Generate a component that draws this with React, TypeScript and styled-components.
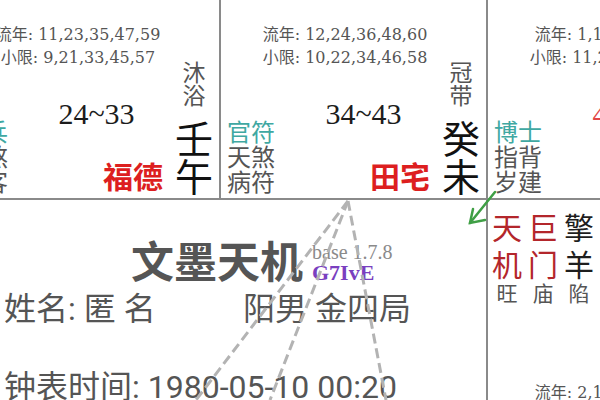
import React from "react";
import styled, { createGlobalStyle } from "styled-components";

const GlobalStyle = createGlobalStyle`
  html, body { margin: 0; padding: 0; background: #fff; }
  body {
    width: 600px;
    height: 400px;
    overflow: hidden;
    font-family: "Noto Sans CJK SC", "Noto Sans", sans-serif;
  }
`;

const CJK = `"Noto Sans CJK SC", "Noto Sans", sans-serif`;

const Viewport = styled.div`
  position: relative;
  width: 600px;
  height: 400px;
  overflow: hidden;
  background: #fff;
`;

const Chart = styled.div`
  display: grid;
  grid-template-columns: 267px 267px 267px;
  grid-template-rows: 358px 358px;
  width: max-content;
  margin: -158px 0 0 -46px;
`;

const Cell = styled.div<{ $col: number; $row: number; $span?: number }>`
  grid-column: ${(p) => p.$col} / span ${(p) => p.$span ?? 1};
  grid-row: ${(p) => p.$row};
  border-right: 2px solid #8a8a8a;
  border-bottom: 2px solid #8a8a8a;
  display: flex;
  flex-direction: column;
  min-width: 0;
  overflow: hidden;
  font-family: ${CJK};
`;

/* ---------- major stars ---------- */
const StarRow = styled.div`
  display: flex;
  gap: 6px;
  padding: 8px 0 0 4px;
`;

const Star = styled.div`
  display: flex;
  flex-direction: column;
  align-items: center;
`;

const StarName = styled.div<{ $tone: "red" | "dark" }>`
  width: 1em;
  font-size: 30px;
  line-height: 37px;
  text-align: center;
  color: ${(p) => (p.$tone === "red" ? "#b3262b" : "#1e1e1e")};
`;

const Brightness = styled.div`
  font-size: 21px;
  line-height: 21px;
  color: #555;
`;

/* ---------- bottom block of a palace ---------- */
const Bottom = styled.div`
  margin-top: auto;
  height: 175px;
  display: grid;
  grid-template-columns: 1fr 38px;
  padding-right: 6px;
`;

const Main = styled.div`
  display: flex;
  flex-direction: column;
  min-width: 0;
`;

const YearLines = styled.div`
  padding-left: 27px;
  text-align: center;
  white-space: nowrap;
  font-family: "DejaVu Serif", ${CJK};
  font-size: 16px;
  line-height: 23px;
  color: #555;
`;

const Lower = styled.div`
  flex: 1;
  display: grid;
  grid-template-columns: 55px 1fr;
  grid-template-rows: auto 1fr;
`;

const Minor = styled.div`
  grid-column: 1;
  grid-row: 1 / span 2;
  align-self: end;
  padding: 0 0 5px 6px;
  font-size: 24px;
  line-height: 25px;
  white-space: nowrap;
`;

const MinorName = styled.div<{ $teal?: boolean }>`
  color: ${(p) => (p.$teal ? "#3fa8a2" : "#555")};
`;

const Age = styled.div<{ $current?: boolean }>`
  grid-column: 2;
  grid-row: 1;
  margin-top: 30px;
  padding-left: 9px;
  text-align: center;
  white-space: nowrap;
  font-family: "Liberation Serif", serif;
  font-size: 30px;
  line-height: 30px;
  color: ${(p) => (p.$current ? "#e24646" : "#1c1c1c")};
`;

const PalaceName = styled.div`
  grid-column: 2;
  grid-row: 2;
  align-self: end;
  justify-self: end;
  margin: 0 12px 8px 0;
  font-size: 30px;
  line-height: 30px;
  font-weight: 700;
  color: #dd1f1f;
`;

const StemCol = styled.div`
  display: flex;
  flex-direction: column;
  justify-content: flex-end;
  align-items: center;
  gap: 12px;
  padding-bottom: 4px;
`;

const Vertical = styled.div<{ $size: number; $color: string }>`
  width: 1em;
  font-size: ${(p) => p.$size}px;
  line-height: ${(p) => p.$size}px;
  text-align: center;
  color: ${(p) => p.$color};
`;

/* ---------- centre ---------- */
const TitleRow = styled.div`
  margin-top: 35px;
  display: flex;
  justify-content: center;
  padding-right: 6px;
`;

const Title = styled.div`
  position: relative;
  font-size: 43px;
  line-height: 48px;
  font-weight: 700;
  color: #555;
  white-space: nowrap;
`;

const Version = styled.div`
  position: absolute;
  left: 100%;
  top: 7px;
  margin-left: 9px;
  font-family: "Liberation Serif", serif;
  font-weight: 400;
  white-space: nowrap;
`;

const VersionBase = styled.div`
  font-size: 20px;
  line-height: 20px;
  color: #8a8a8a;
`;

const VersionCode = styled.div`
  font-size: 22px;
  line-height: 22px;
  font-weight: 700;
  color: #7a3fc0;
`;

const Info = styled.div`
  margin-top: 6px;
  padding-left: 50px;
  display: grid;
  grid-template-columns: 239px auto;
  row-gap: 38px;
  font-family: Roboto, ${CJK};
  font-size: 32px;
  line-height: 40px;
  color: #555;
  white-space: nowrap;
`;

const InfoWide = styled.div`
  grid-column: 1 / span 2;
`;

const Overlay = styled.svg`
  position: absolute;
  left: 0;
  top: 0;
  width: 600px;
  height: 400px;
  pointer-events: none;
`;

type StarData = { name: string; tone: "red" | "dark"; bright: string };
type PalaceData = {
  col: number;
  row: number;
  liunian: string;
  xiaoxian: string;
  age: string;
  current?: boolean;
  minor: { name: string; teal?: boolean }[];
  name: string;
  changsheng: string;
  stem: string;
  stars?: StarData[];
};

const palaces: PalaceData[] = [
  {
    col: 1,
    row: 1,
    liunian: "11,23,35,47,59",
    xiaoxian: "9,21,33,45,57",
    age: "24~33",
    minor: [{ name: "伏兵", teal: true }, { name: "灾煞" }, { name: "吊客" }],
    name: "福德",
    changsheng: "沐浴",
    stem: "壬午",
  },
  {
    col: 2,
    row: 1,
    liunian: "12,24,36,48,60",
    xiaoxian: "10,22,34,46,58",
    age: "34~43",
    minor: [{ name: "官符", teal: true }, { name: "天煞" }, { name: "病符" }],
    name: "田宅",
    changsheng: "冠带",
    stem: "癸未",
  },
  {
    col: 3,
    row: 1,
    liunian: "1,13,25,37,49",
    xiaoxian: "11,23,35,47,59",
    age: "44~53",
    current: true,
    minor: [{ name: "博士", teal: true }, { name: "指背" }, { name: "岁建" }],
    name: "官禄",
    changsheng: "临官",
    stem: "甲申",
  },
  {
    col: 3,
    row: 2,
    liunian: "2,14,26,38,50",
    xiaoxian: "12,24,36,48,60",
    age: "54~63",
    minor: [{ name: "力士", teal: true }, { name: "咸池" }, { name: "晦气" }],
    name: "交友",
    changsheng: "帝旺",
    stem: "乙酉",
    stars: [
      { name: "天机", tone: "red", bright: "旺" },
      { name: "巨门", tone: "red", bright: "庙" },
      { name: "擎羊", tone: "dark", bright: "陷" },
    ],
  },
];

function Palace({ p }: { p: PalaceData }) {
  return (
    <Cell $col={p.col} $row={p.row}>
      {p.stars && (
        <StarRow>
          {p.stars.map((s) => (
            <Star key={s.name}>
              <StarName $tone={s.tone}>{s.name}</StarName>
              <Brightness>{s.bright}</Brightness>
            </Star>
          ))}
        </StarRow>
      )}
      <Bottom>
        <Main>
          <YearLines>
            <div>流年: {p.liunian}</div>
            <div>小限: {p.xiaoxian}</div>
          </YearLines>
          <Lower>
            <Age $current={p.current}>{p.age}</Age>
            <Minor>
              {p.minor.map((m) => (
                <MinorName key={m.name} $teal={m.teal}>
                  {m.name}
                </MinorName>
              ))}
            </Minor>
            <PalaceName>{p.name}</PalaceName>
          </Lower>
        </Main>
        <StemCol>
          <Vertical $size={23} $color="#555">
            {p.changsheng}
          </Vertical>
          <Vertical $size={38} $color="#111">
            {p.stem}
          </Vertical>
        </StemCol>
      </Bottom>
    </Cell>
  );
}

export default function App() {
  return (
    <>
      <GlobalStyle />
      <Viewport>
        <Chart>
          {palaces.map((p) => (
            <Palace key={`${p.col}-${p.row}`} p={p} />
          ))}
          <Cell $col={1} $row={2} $span={2}>
            <TitleRow>
              <Title>
                文墨天机
                <Version>
                  <VersionBase>base 1.7.8</VersionBase>
                  <VersionCode>G7IvE</VersionCode>
                </Version>
              </Title>
            </TitleRow>
            <Info>
              <div>姓名: 匿 名</div>
              <div>阳男 金四局</div>
              <InfoWide>钟表时间: 1980-05-10 00:20</InfoWide>
            </Info>
          </Cell>
        </Chart>
        <Overlay viewBox="0 0 600 400">
          <g stroke="#b3b3b3" strokeWidth="3" strokeDasharray="10 5" fill="none">
            <line x1="348" y1="201" x2="196" y2="400" />
            <line x1="348" y1="201" x2="270" y2="400" />
            <line x1="348" y1="201" x2="386" y2="400" />
          </g>
          <g stroke="#3f9f45" strokeWidth="2.5" fill="none" strokeLinecap="round">
            <line x1="495" y1="192" x2="470" y2="223" />
            <polyline points="473,209 470,223 485,220" />
          </g>
        </Overlay>
      </Viewport>
    </>
  );
}
